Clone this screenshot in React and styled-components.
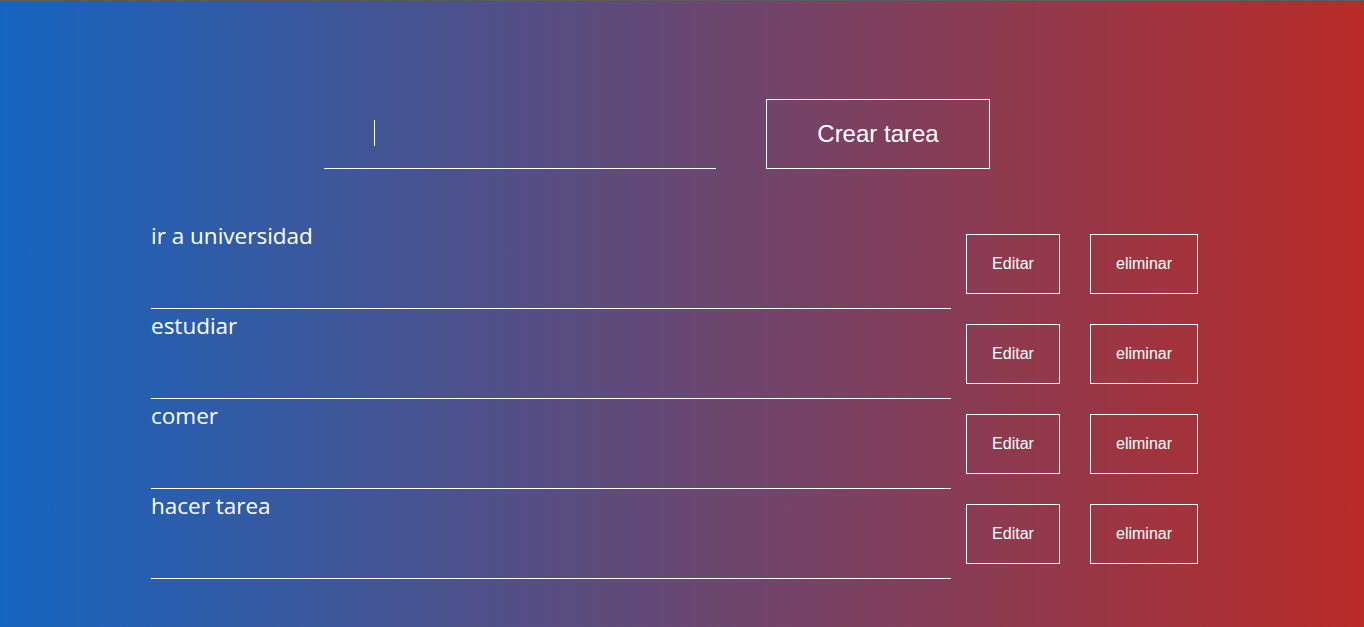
import styled, { createGlobalStyle } from "styled-components";

const tasks = ["ir a universidad", "estudiar", "comer", "hacer tarea"];

const App = () => {
  return (
    <>
      <GlobalStyle />
      <Page>
        <Form onSubmit={(e) => e.preventDefault()}>
          <InputWrap>
            <Input type="text" autoFocus />
            <Caret />
          </InputWrap>
          <CreateButton type="submit">Crear tarea</CreateButton>
        </Form>
        <List>
          {tasks.map((task, i) => (
            <Row key={i}>
              <TaskText>{task}</TaskText>
              <ActionButton width="94px" gap="15px">
                Editar
              </ActionButton>
              <ActionButton width="108px" gap="30px">
                eliminar
              </ActionButton>
            </Row>
          ))}
        </List>
      </Page>
    </>
  );
};

export default App;

const GlobalStyle = createGlobalStyle`
  * {
    box-sizing: border-box;
  }

  body {
    margin: 0;
    font-family: "Liberation Sans", Arial, sans-serif;
  }
`;

const Page = styled.div`
  min-height: 627px;
  border-top: 1px solid #5b5b5b;
  background: linear-gradient(to right, #1565c0, #b92b27);
  padding-top: 98px;
`;

const Form = styled.form`
  display: flex;
  align-items: center;
  gap: 50px;
  padding-left: 324px;
`;

const InputWrap = styled.div`
  position: relative;
  display: flex;
`;

const Input = styled.input`
  width: 392px;
  height: 70px;
  padding: 0 0 0 50px;

  background: transparent;
  border: none;
  border-bottom: 1px solid #fff;
  outline: none;

  color: #fff;
  caret-color: transparent;
  font-family: "Liberation Sans", Arial, sans-serif;
  font-size: 22px;
`;

/* the blinking caret seen in the screenshot */
const Caret = styled.span`
  position: absolute;
  left: 50px;
  top: 21px;
  width: 1px;
  height: 26px;
  background: #fff;
  pointer-events: none;
`;

const CreateButton = styled.button`
  width: 224px;
  height: 70px;

  background: transparent;
  border: 1px solid #fff;

  color: #fff;
  font-family: "Liberation Sans", Arial, sans-serif;
  font-size: 24px;
`;

const List = styled.div`
  display: flex;
  flex-direction: column;
  margin-top: 50px;
  padding-left: 151px;
`;

const Row = styled.div`
  display: flex;
  align-items: center;
`;

const TaskText = styled.div`
  width: 800px;
  height: 90px;
  padding-top: 2px;
  border-bottom: 1px solid #fff;

  color: #fff;
  font-family: "Open Sans", "Noto Sans", sans-serif;
  font-size: 22.5px;
  line-height: 1.3;
`;

const ActionButton = styled.button`
  width: ${(p) => p.width};
  height: 60px;
  margin-left: ${(p) => p.gap};

  background: transparent;
  border: 1px solid #fff;

  color: #fff;
  font-family: "Liberation Sans", Arial, sans-serif;
  font-size: 16px;
`;
